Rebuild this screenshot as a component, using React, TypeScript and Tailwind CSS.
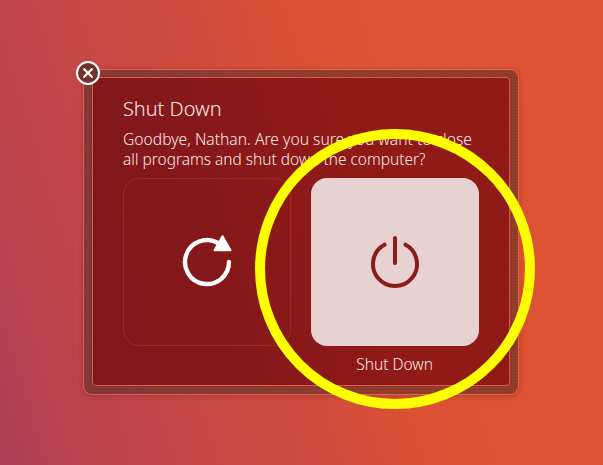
import React from "react";

function RestartIcon() {
  return (
    <svg width="56" height="56" viewBox="0 0 56 56" fill="none">
      <path d="M50 28 A22 22 0 1 1 38.5 8.7" stroke="#fff" strokeWidth="4.4" strokeLinecap="round" />
      <path d="M43.5 2.2 L51.5 16.2 L35.5 16.2 Z" fill="#fff" stroke="#fff" strokeWidth="2" strokeLinejoin="round" />
    </svg>
  );
}

function PowerIcon() {
  return (
    <svg width="56" height="56" viewBox="0 0 56 56" fill="none" stroke="#8b1c19" strokeWidth="4" strokeLinecap="round">
      <path d="M17.5 10.7 A22 22 0 1 0 38.5 10.7" />
      <path d="M28 4V29" />
    </svg>
  );
}

export default function App() {
  return (
    <main className="relative h-[465px] w-[603px] overflow-hidden bg-[linear-gradient(73deg,#ad3d55_0%,#b8424e_10%,#c0464a_20%,#ce4b40_40%,#dd5233_62%,#dd5333_100%)] pt-[69px] pl-[83px] font-['Noto_Sans','Open_Sans',sans-serif] font-light text-[#faeae8]">
      <section
        role="dialog"
        aria-label="Shut Down"
        className="relative h-[326px] w-[436px] rounded-[9px] border border-[#e8705c]/60 bg-[radial-gradient(circle,#74342d_0.4px,transparent_1px),linear-gradient(75deg,#843838,#953d2b_65%)] bg-size-[3px_3px,100%_100%] bg-clip-padding px-2 pt-[7px] pb-2 shadow-[0_1px_5px_rgba(80,20,10,0.3)]"
      >
        <div className="h-full rounded-[4px] border border-[#d95a4c] bg-[linear-gradient(75deg,#7e171d,#87181a_35%,#901a16_65%)] px-[30px] pt-[19px]">
          <h1 className="h-6 text-[20px] leading-6 whitespace-nowrap">
            <span className="inline-block origin-left scale-x-[0.995]">Shut Down</span>
          </h1>
          <p className="mt-2 text-[16px] leading-5 whitespace-nowrap">
            <span className="block w-max origin-left scale-x-[0.979]">Goodbye, Nathan. Are you sure you want to close</span>
            <span className="block w-max origin-left scale-x-[0.966]">all programs and shut down the computer?</span>
          </p>
          <div className="mt-[9px] flex gap-5">
            <button aria-label="Restart" className="flex size-[168px] items-center justify-center rounded-[16px] border border-[#a83434]/60">
              <RestartIcon />
            </button>
            <div className="flex w-[168px] flex-col items-center">
              <button aria-label="Power off" className="flex size-[168px] items-center justify-center rounded-[16px] bg-[#e8d1d1]">
                <PowerIcon />
              </button>
              <span className="mt-2 inline-block scale-x-[0.97] text-[16px] leading-5">Shut Down</span>
            </div>
          </div>
        </div>
        <button aria-label="Close" className="absolute -top-[9px] -left-2 flex size-6 items-center justify-center rounded-full border-2 border-white bg-[#70332b]">
          <svg width="10" height="10" viewBox="0 0 10 10" stroke="#fff" strokeWidth="2.2" strokeLinecap="round">
            <path d="M1.2 1.2 8.8 8.8M8.8 1.2 1.2 8.8" />
          </svg>
        </button>
      </section>
      <div className="pointer-events-none absolute top-[129px] left-[255px] size-[280px] rounded-full border-[10px] border-[#ffff00]" />
    </main>
  );
}
